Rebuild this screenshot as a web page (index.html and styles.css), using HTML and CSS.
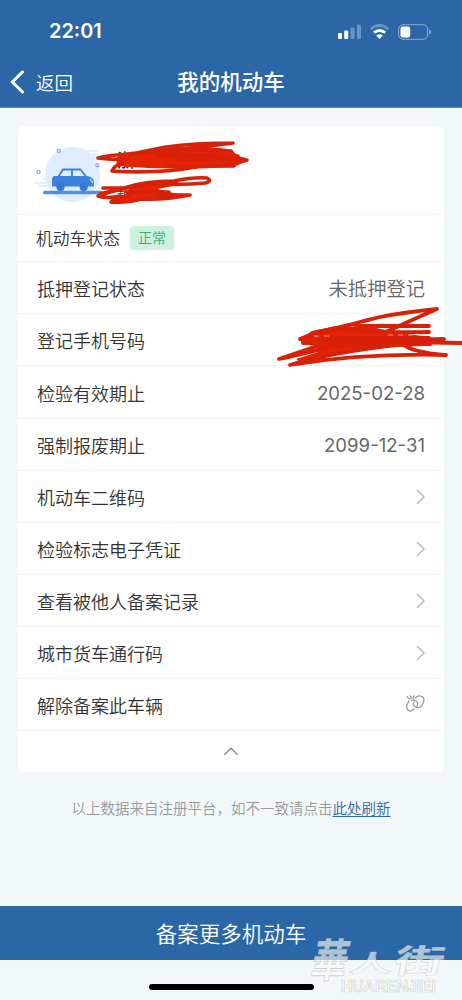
FILE: index.html
```html
<!DOCTYPE html>
<html lang="zh-CN">
<head>
<meta charset="utf-8">
<meta name="viewport" content="width=device-width, initial-scale=1">
<title>我的机动车</title>
<link rel="stylesheet" href="styles.css">
</head>
<body>
<div class="screen">
  <header class="top">
    <div class="statusbar">
      <span class="time">22:01</span>
      <svg class="indicators" width="96" height="20" viewBox="0 0 96 20" fill="none">
        <g fill="#fff">
          <rect x="2" y="12" width="4" height="6" rx="1"/>
          <rect x="8.2" y="9.5" width="4" height="8.5" rx="1"/>
          <rect x="14.6" y="6.5" width="4" height="11.5" rx="1" opacity=".3"/>
          <rect x="21" y="3.5" width="4" height="14.5" rx="1" opacity=".3"/>
        </g>
        <path d="M34.8 8.2Q43.5 .6 52.2 8.2" stroke="#fff" stroke-opacity=".3" stroke-width="2.8"/>
        <path d="M37.9 11.7Q43.5 7.2 49.2 11.7" stroke="#fff" stroke-width="2.8"/>
        <path d="M40.2 14.7Q43.5 12 46.8 14.7L43.5 18Z" fill="#fff"/>
        <rect x="62.6" y="3.7" width="29" height="14.6" rx="4.5" stroke="#fff" stroke-opacity=".45"/>
        <rect x="64.5" y="5.5" width="9.7" height="11" rx="2.3" fill="#fff"/>
        <path d="M93.2 8.6Q95.2 9.3 95.2 11T93.2 13.3Z" fill="#fff" fill-opacity=".45"/>
      </svg>
    </div>
    <nav class="navbar">
      <a class="back">
        <svg width="14" height="24" viewBox="0 0 14 24"><path d="M12.5 2L2.3 12l10.2 10" fill="none" stroke="#fff" stroke-width="3" stroke-linecap="round" stroke-linejoin="round"/></svg>
        <span>返回</span>
      </a>
      <h1 class="title">我的机动车</h1>
    </nav>
  </header>

  <main class="content">
    <section class="card">
      <div class="vehicle">
        <svg class="car" width="76" height="60" viewBox="0 0 76 60" fill="none">
          <circle cx="36.5" cy="33.5" r="27.5" fill="#e1edfd"/>
          <path d="M49 10h13M57 13.5h6M50 16h11M7 38h6M-2 42h15M3 45h11" stroke="#dceafb" stroke-width="1.3" stroke-linecap="round"/>
          <g stroke="#96b0e6" stroke-width="1.4"><circle cx="22.7" cy="10" r="1.6"/><circle cx="2.5" cy="31" r="1.6"/><circle cx="61.5" cy="24.2" r="1.6"/></g>
          <rect x="7" y="49.7" width="60" height="3.5" rx="1.5" fill="#5590dd"/>
          <path d="M22.5 35.500L27 28.500H44.5L50 35.500M36 28.500V35.500" stroke="#397fd5" stroke-width="1.8" stroke-linejoin="round"/>
          <path d="M18 35H51Q58 36.200 58 41V45.500H16V37Z" fill="#3c82dc"/>
          <circle cx="24.5" cy="46" r="4.1" fill="#3279d4"/><circle cx="47.7" cy="46" r="4.1" fill="#3279d4"/>
          <path d="M54 38l3 4" stroke="#d5e7ff" stroke-width="1.2"/>
        </svg>
        <div class="plate"><b>浙</b><small>新</small></div>
        <svg class="scribble" width="160" height="68" viewBox="0 0 160 68" fill="none" stroke="#d82108" stroke-width="3.6" stroke-linecap="round" stroke-linejoin="round">
          <path d="M20 16L32 14L50 14L74 9L100 8L134 12L140 18L148 20L144 25L136 29L90 31L50 30L18 28Z" fill="#e52404" stroke="none"/>
          <path d="M0 20Q10 17 33 16L68 9Q96 5 135 5M0 20Q14 22 30 21M45 15Q90 11 135 5M14 33Q16 27 26 25M14 33Q60 36 98 29M76 11L133 13M60 17L140 18M80 21L149 22L139 25M70 28H136M60 17Q100 8 132 13"/>
          <path d="M31 51L50 45L76 43L84 46L60 51L71 54L90 58L56 62L20 65L14 60L28 58Z" fill="#e52404" stroke="none"/>
          <path d="M5 50H26Q46 43 76 43Q96 39 109 40Q115 43 107 45Q88 47 54 46Q22 50 0 58Q10 61 22 58M28 54L71 54M13 64Q16 60 32 57M13 64Q30 65 42 61Q68 62 92 57L58 57M2 56L30 49"/>
        </svg>
      </div>
      <div class="status"><span>机动车状态</span><em class="badge">正常</em></div>
      <div class="row"><span>抵押登记状态</span><span class="value">未抵押登记</span></div>
      <div class="row phone"><span>登记手机号码</span>
        <svg class="scribble phone-scribble" width="186" height="66" viewBox="0 0 186 66" fill="none" stroke="#d82108" stroke-width="3.8" stroke-linecap="round" stroke-linejoin="round">
          <path d="M24 36L36 28L60 23L97 24L112 28L153 34L156 43L138 43L98 45L60 52L26 60L20 56L42 49L40 43L26 41Z" fill="#e52404" stroke="none"/>
          <path d="M3 56Q30 51 70 39L110 35M3 56L50 40M14 62Q50 50 128 41M14 62Q86 50 170 52M24 36C40 32 80 19 104 14Q130 9 161 6Q138 16 112 28M37 30Q74 22 104 14M24 36Q40 29 60 26M80 23H153M60 25Q100 30 153 29M44 35H153M27 40L168 36M57 38L186 40M42 44L150 41M128 42Q137 49 168 52"/>
          <path d="M112 32H150M38 33H54" stroke="#f3a18f" stroke-width="1" stroke-dasharray="5 5" stroke-linecap="butt"/>
        </svg>
      </div>
      <div class="row"><span>检验有效期止</span><span class="value date">2025-02-28</span></div>
      <div class="row"><span>强制报废期止</span><span class="value date">2099-12-31</span></div>
      <div class="row"><span>机动车二维码</span><svg class="chevron" viewBox="0 0 10 16"><path d="M1 1l7 7-7 7"/></svg></div>
      <div class="row"><span>检验标志电子凭证</span><svg class="chevron" viewBox="0 0 10 16"><path d="M1 1l7 7-7 7"/></svg></div>
      <div class="row"><span>查看被他人备案记录</span><svg class="chevron" viewBox="0 0 10 16"><path d="M1 1l7 7-7 7"/></svg></div>
      <div class="row"><span>城市货车通行码</span><svg class="chevron" viewBox="0 0 10 16"><path d="M1 1l7 7-7 7"/></svg></div>
      <div class="row"><span>解除备案此车辆</span>
        <svg class="unlink" width="19" height="18" viewBox="0 0 19 18" fill="none" stroke="#999" stroke-width="1.3" stroke-linecap="round" stroke-linejoin="round">
          <path d="M2.6 6C2.8 8 .5 9 .7 12C.8 15 3 16.5 5 15.8C6.5 15.5 6.5 14 8 14.3M5.5 5.5C9 3.8 13 7.5 11 11.2M9.3 3C11 .2 15 .2 17 2.2C19.5 5 17 7 16.4 9.5C15.5 12.5 12 13.5 9.5 12C7.3 10.8 7 8.5 8 7M1 1.7L3.5 3.7M4.4.8L5 3.5M8 1L7 3.5"/>
        </svg>
      </div>
      <div class="collapse"><svg width="16" height="9" viewBox="0 0 16 9"><path d="M1.3 7.7L8 1.2l6.7 6.5" fill="none" stroke="#888" stroke-width="1.3"/></svg></div>
    </section>
    <p class="note">以上数据来自注册平台，如不一致请点击<a>此处刷新</a></p>
  </main>

  <button class="more">备案更多机动车</button>
  <footer class="home"><i class="home-bar"></i></footer>
  <div class="watermark"><div class="brand"><span class="hua">華</span><span class="ren">人</span><span class="jie">街</span></div><div class="latin">HUARENJIEI</div></div>
</div>
</body>
</html>
```
FILE: styles.css
```css
* { box-sizing: border-box; }
body { margin: 0; background: #f2f8f9; font-family: "Noto Sans CJK SC", sans-serif; font-weight: 350; }
.screen { position: relative; display: flex; flex-direction: column; width: 462px; height: 1000px; overflow: hidden; color: #333; }
.top { height: 108px; background: #2b66a6; color: #fff; border-bottom: 1px solid #5b88b8; }
.statusbar { display: flex; justify-content: space-between; align-items: center; height: 60px; padding: 1px 30px 0 49px; }
.time { font: 600 19.9px/24px Inter, sans-serif; padding-top: 1px; }
.indicators { display: block; }
.navbar { display: grid; grid-template-columns: 1fr auto 1fr; align-items: center; height: 43px; padding: 0 10px; }
.back { display: flex; align-items: center; gap: 12px; font-size: 18.5px; line-height: 28px; }
.title { margin: -1px 0 0; font-size: 21.5px; line-height: 30px; font-weight: 500; }
.content { flex: 1; padding: 18px 18px 0; }
.card { height: 646px; background: #fff; border-radius: 6px; }
.vehicle { position: relative; display: flex; height: 88px; padding: 15px 18px; gap: 5px; }
.car { display: block; flex: none; overflow: visible; }
.plate { display: flex; flex-direction: column; padding: 5px 0 0; }
.plate b { font-size: 18px; line-height: 26px; font-weight: 500; }
.plate small { font-size: 13px; line-height: 26px; padding-top: 7px; }
.scribble { position: absolute; left: 80px; top: 12px; overflow: visible; z-index: 1; }
.status { display: flex; align-items: center; gap: 10px; height: 47.3px; padding: 0 18px; border-top: 1px solid #f3f5f5; font-size: 16.8px; line-height: 24px; }
.status > span { margin-top: -1px; }
.badge { width: 44px; height: 24px; border-radius: 4px; background: #cdf1df; color: #3aae74; font-size: 14px; line-height: 23px; font-style: normal; text-align: center; }
.row { position: relative; display: flex; justify-content: space-between; align-items: center; height: 52.1px; padding: 1px 19px 0; border-top: 1px solid #f1f3f3; font-size: 18px; }
.value { color: #666; font-size: 19.3px; }
.date { font-family: Inter, sans-serif; font-size: 18.6px; font-weight: 400; }
.phone-scribble { left: 258px; top: -11px; }
.chevron { width: 10px; height: 16px; margin-right: -1px; fill: none; stroke: #bbb; stroke-width: 1.5; }
.unlink { margin-top: -2px; }
.collapse { display: flex; justify-content: center; align-items: center; height: 41px; border-top: 1px solid #f1f3f3; }
.note { margin: 24px 0 0; text-align: center; color: #999; font-size: 14.5px; line-height: 24px; white-space: nowrap; }
.note a { color: #2b66a6; text-decoration: underline; text-underline-offset: 2px; }
.more { flex: none; height: 54px; border: 0; padding: 0 0 2px; background: #2b66a6; color: #fff; font-family: inherit; font-size: 21.5px; font-weight: 350; }
.home { flex: none; display: flex; justify-content: center; height: 40px; padding-top: 24px; }
.home-bar { width: 165px; height: 6px; border-radius: 3px; background: #000; }
.watermark { position: absolute; left: 314px; top: 930px; width: 142px; height: 70px; color: rgba(250,252,252,.65); -webkit-text-stroke: .7px rgba(196,196,188,.75); }
.brand { display: flex; height: 48px; align-items: flex-start; line-height: 48px; font-weight: 700; transform: skewX(-12deg); }
.hua { width: 38px; font-size: 36px; transform: translateY(3px) scaleY(1.25); }
.ren { width: 44px; font-size: 43px; transform: translateY(8px) scaleY(.55); }
.jie { font-size: 50px; transform: translateY(5px) scaleY(.65); }
.latin { padding-left: 27px; font: 700 15.8px/18px "Liberation Sans", sans-serif; letter-spacing: -.1px; }
```
